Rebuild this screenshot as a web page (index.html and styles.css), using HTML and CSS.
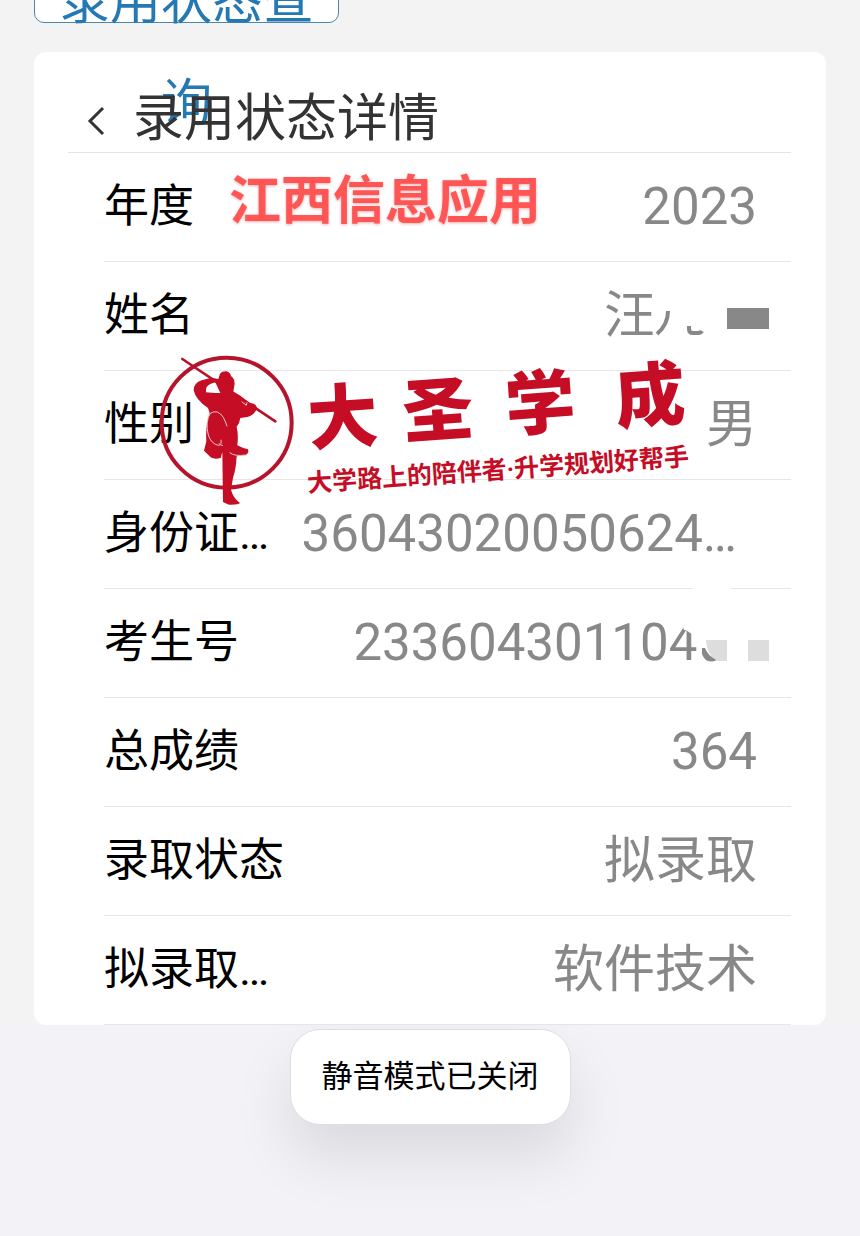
FILE: index.html
```html
<!DOCTYPE html>
<html lang="zh-CN">
<head>
    <meta charset="UTF-8">
    <meta name="viewport" content="width=device-width, initial-scale=1.0">
    <title>录用状态详情</title>
    <link rel="stylesheet" href="styles.css">
</head>
<body>
    <div class="page">
        <a class="query-btn" href="#">录用状态查询</a>

        <div class="card">
            <div class="card-header">
                <button class="back-btn" type="button" aria-label="返回">
                    <svg width="20" height="30" viewBox="0 0 20 30">
                        <path d="M17 2 L4 15 L17 28" fill="none" stroke="#333" stroke-width="3"/>
                    </svg>
                </button>
                <h2>录用状态详情</h2>
            </div>

            <dl class="details">
                <div class="row"><dt>年度</dt><dd>2023</dd></div>
                <div class="row">
                    <dt>姓名</dt>
                    <dd class="masked-name">汪
                        <svg class="mask" width="116" height="108" viewBox="0 0 116 108">
                            <path d="M15 49 C15 58 11 66 4 72" fill="none" stroke="#888" stroke-width="4"/>
                            <path d="M36 64 V67 Q36 71 40 71 H44 Q48 71 49 69" fill="none" stroke="#888" stroke-width="4"/>
                            <rect x="74" y="46" width="42" height="21" fill="#888"/>
                        </svg>
                    </dd>
                </div>
                <div class="row"><dt>性别</dt><dd>男</dd></div>
                <div class="row"><dt>身份证…</dt><dd class="id-number">36043020050624…</dd></div>
                <div class="row">
                    <dt>考生号</dt>
                    <dd class="masked-number">2336043011048
                        <svg class="mask" width="116" height="109" viewBox="0 0 116 109">
                            <path d="M39 -2 H78 V2 H39 Z M26 25 L31 41 L33 41 L40 46 L45 48 V57 H47 V80 H80 V25 Z" fill="#fff"/>
                            <path d="M49 59 H52 Q54 66 64 71 Q53 76 49 65 Z" fill="#888"/>
                            <path d="M53 51 H74 V72 H65 Q54 67 53 51 Z" fill="#ddd"/>
                            <rect x="95" y="51" width="21" height="21" fill="#ddd"/>
                        </svg>
                    </dd>
                </div>
                <div class="row"><dt>总成绩</dt><dd>364</dd></div>
                <div class="row"><dt>录取状态</dt><dd>拟录取</dd></div>
                <div class="row"><dt>拟录取…</dt><dd>软件技术</dd></div>
            </dl>

            <div class="stamp">江西信息应用</div>

            <svg class="logo" width="560" height="170" viewBox="0 0 560 170">
                <!-- figure with staff -->
                <g transform="scale(0.3333)" fill="#c50d25">
                    <circle cx="230" cy="248" r="195" fill="none" stroke="#b5142c" stroke-width="12"/>
                    <path d="M97 57 L376 244" stroke="#b5142c" stroke-width="8" stroke-linecap="round"/>
                    <path fill-rule="evenodd" d="M210 101 Q216 93 230 94 Q241 97 243 108 Q254 116 254 131 L250 155 L271 167 L298 189 Q316 188 321 203 Q315 225 292 231 L271 234 Q269 250 260 260 Q266 285 262 316 Q279 325 294 328 Q298 339 288 345 L260 349 Q258 389 249 413 L243 449 Q250 475 270 489 Q265 495 237 494 L219 486 L217 337 Q213 348 213 353 Q195 360 182 352 L162 332 L169 304 Q166 255 179 219 L174 204 Q137 180 131 151 Q131 129 155 121 L185 113 L205 117 Z M168 147 Q170 133 196 127 L211 159 Q183 159 168 157 Z"/>
                    <path d="M181 220 Q203 206 220 232 Q228 248 231 259 M181 220 Q165 245 175 285 Q183 311 205 316 Q216 316 213 299 M219 317 Q210 316 207 310 M239 338 Q255 350 287 345 M275 185 L289 196 L291 187" fill="none" stroke="#f4c3c9" stroke-width="3"/>
                </g>
                <g class="logo-text" transform="rotate(-4 158 155)">
                    <text class="brand" y="105"><tspan x="163">大</tspan><tspan x="258">圣</tspan><tspan x="361">学</tspan><tspan x="471">成</tspan></text>
                    <text class="slogan" x="158" y="152">大学路上的陪伴者·升学规划好帮手</text>
                </g>
            </svg>
        </div>
    </div>

    <div class="toast" role="status">静音模式已关闭</div>
</body>
</html>
```

FILE: styles.css
```css
* {
    box-sizing: border-box;
}

body {
    display: flow-root;
    min-height: 100vh;
    margin: 0;
    font-family: Roboto, "Noto Sans CJK SC", sans-serif;
    background: #f2f2f7;
    color: #000;
}

.page {
    display: flow-root;
    padding: 0 34px;
    background: #f3f3f3;
}

/* scrolled partly out of view, second line spills onto the card */
.query-btn {
    display: block;
    position: relative;
    z-index: 1;
    width: 305px;
    height: 73px;
    margin-top: -50px;
    padding: 0 20px;
    border: 1px solid #4b86ae;
    border-radius: 10px;
    background: #fff;
    color: #2478b3;
    font-size: 51px;
    line-height: 102px;
    text-align: center;
    text-decoration: none;
}

.card {
    position: relative;
    margin-top: 29px;
    padding: 0 35px 0 34px;
    background: #fff;
    border-radius: 12px;
}

.card-header {
    display: flex;
    align-items: center;
    gap: 27px;
    height: 101px;
    padding: 34px 0 0 18px;
    border-bottom: 1px solid #e4e4e4;
}

.card-header h2 {
    position: relative;
    z-index: 2;
    margin: 0;
    font-size: 51px;
    font-weight: 400;
    line-height: 70px;
    color: #333;
}

.back-btn {
    padding: 4px 0 0;
    border: none;
    background: none;
    cursor: pointer;
}

.back-btn svg {
    display: block;
}

.details {
    margin: 0 0 0 36px;
}

.row {
    display: flex;
    align-items: flex-start;
    justify-content: space-between;
    height: 109px;
    padding-right: 34px;
    border-bottom: 1px solid #e6e6e6;
}

.row dt {
    font-size: 45px;
    line-height: 108px;
    white-space: nowrap;
}

.row dd {
    margin: 0;
    font-size: 51px;
    line-height: 108px;
    color: #888;
    white-space: nowrap;
}

.row .id-number {
    padding-right: 20px;
}

.masked-name,
.masked-number {
    position: relative;
}

.row .masked-name {
    padding-right: 102px;
}

.row .masked-number {
    padding-right: 31px;
}

.mask {
    position: absolute;
    top: 0;
    right: -12px;
    overflow: visible;
}

/* watermarks */
.stamp {
    position: absolute;
    top: 114px;
    left: 195px;
    font-size: 52px;
    font-weight: 700;
    line-height: 72px;
    color: #f55;
    text-shadow: 0 1px 3px rgba(190, 60, 60, 0.4);
}

.logo {
    position: absolute;
    top: 288px;
    left: 116px;
}

.logo-text {
    fill: #c50d25;
}

.brand {
    font-size: 70px;
    font-weight: 900;
}

.slogan {
    font-size: 25px;
    font-weight: 700;
}

.toast {
    width: fit-content;
    margin: 4px auto 0;
    padding: 24px 31px;
    border: 1px solid #dedee2;
    border-radius: 30px;
    background: #fff;
    font-size: 31px;
    line-height: 46px;
    box-shadow: 0 32px 60px rgba(0, 0, 0, 0.1);
}
```
